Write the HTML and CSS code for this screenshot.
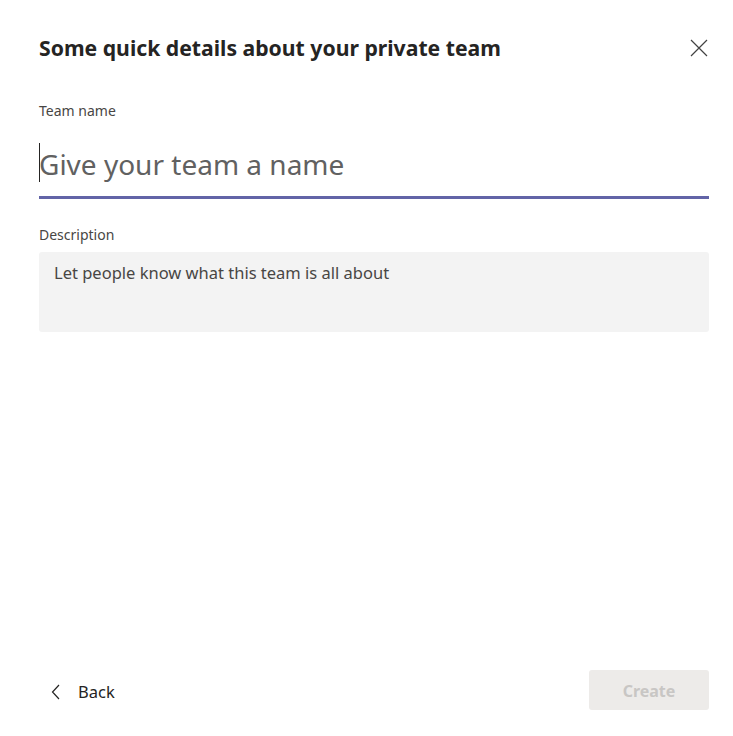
FILE: index.html
```html
<!DOCTYPE html>
<html>
<head>
<meta charset="utf-8">
<link rel="stylesheet" href="styles.css">
</head>
<body>
<div class="dialog">
  <div class="header">
    <h1 class="title">Some quick details about your private team</h1>
    <button class="close" aria-label="Close">
      <svg width="18" height="18" viewBox="0 0 18 18"><path d="M1 1 L17 17 M17 1 L1 17" stroke="#424242" stroke-width="1.2" fill="none"/></svg>
    </button>
  </div>
  <div class="field">
    <div class="label">Team name</div>
    <div class="name-input"><span class="caret"></span><span class="placeholder">Give your team a name</span></div>
  </div>
  <div class="field desc-field">
    <div class="label">Description</div>
    <div class="desc-box">Let people know what this team is all about</div>
  </div>
  <div class="spacer"></div>
  <div class="footer">
    <button class="back">
      <svg width="10" height="16" viewBox="0 0 10 16"><path d="M8 1 L1.5 8 L8 15" stroke="#252423" stroke-width="1.2" fill="none"/></svg>
      <span>Back</span>
    </button>
    <button class="create">Create</button>
  </div>
</div>
</body>
</html>
```

FILE: styles.css
```css
html, body {
  margin: 0;
  padding: 0;
  background: #ffffff;
}
body {
  font-family: "Noto Sans", "Open Sans", sans-serif;
  color: #252423;
}
.dialog {
  width: 733px;
  height: 736px;
  box-sizing: border-box;
  padding: 33px 24px 26px 39px;
  display: flex;
  flex-direction: column;
}
.header {
  display: flex;
  justify-content: space-between;
  align-items: flex-start;
  height: 68px;
}
.title {
  margin: 0;
  font-size: 21.2px;
  font-weight: 700;
  line-height: 30px;
  color: #252423;
}
.close {
  border: 0;
  background: none;
  padding: 0;
  margin: 6px 1px 0 0;
  width: 18px;
  height: 18px;
  display: flex;
}
.label {
  font-size: 14px;
  line-height: 20px;
  color: #484644;
}
.name-input {
  margin-top: 22px;
  height: 53px;
  border-bottom: 3px solid #6264a7;
  display: flex;
  align-items: flex-start;
  position: relative;
}
.caret {
  position: absolute;
  left: 0;
  top: 0;
  width: 1px;
  height: 39px;
  background: #252423;
}
.placeholder {
  font-size: 28px;
  line-height: 40px;
  color: #616161;
  margin-top: 1px;
}
.desc-field {
  margin-top: 26px;
}
.desc-box {
  margin-top: 7px;
  height: 80px;
  box-sizing: border-box;
  background: #f3f3f3;
  border-radius: 3px;
  padding: 9px 15px;
  font-size: 16.5px;
  line-height: 24px;
  color: #484644;
}
.spacer {
  flex: 1;
}
.footer {
  display: flex;
  justify-content: space-between;
  align-items: center;
}
.back {
  border: 0;
  background: none;
  padding: 3px 0 0 12px;
  display: flex;
  align-items: center;
  gap: 17px;
  font-family: inherit;
  font-size: 16.5px;
  color: #252423;
}
.create {
  width: 120px;
  height: 40px;
  border: 0;
  border-radius: 3px;
  background: #edebe9;
  color: #c8c6c4;
  font-family: inherit;
  font-size: 16px;
  font-weight: 700;
  padding-top: 2px;
}
```
